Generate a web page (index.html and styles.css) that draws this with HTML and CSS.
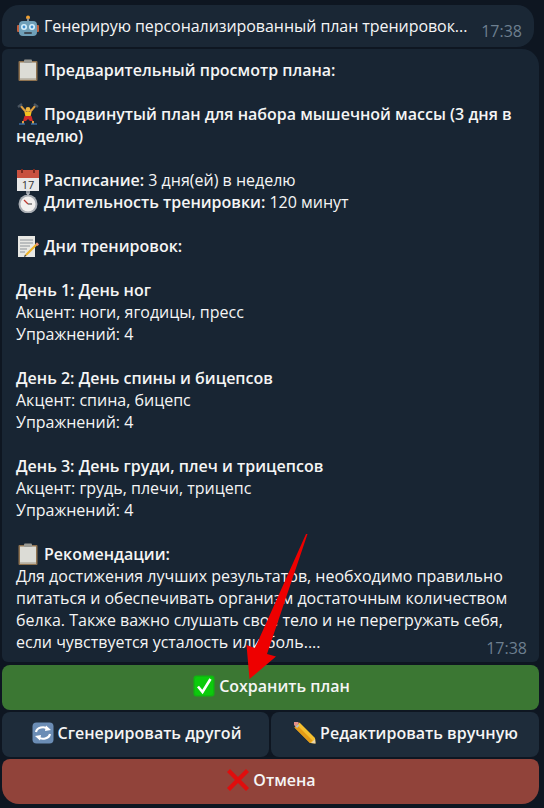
FILE: index.html
```html
<!DOCTYPE html>
<html lang="ru">
<head>
<meta charset="utf-8">
<title>План тренировок</title>
<link rel="stylesheet" href="styles.css">
</head>
<body>
<svg class="defs" width="0" height="0" aria-hidden="true">
  <symbol id="clipboard" viewBox="0 0 22 22">
    <rect x="1.5" y="2" width="19" height="20" rx="1" fill="#8f7350"/>
    <rect x="3" y="3.5" width="16" height="17" fill="#dcdcd6"/>
    <rect x="7" y="0.5" width="8" height="3.5" rx="1" fill="#9a9a94"/>
    <rect x="3" y="19" width="16" height="1.5" fill="#bdb9ae"/>
  </symbol>
</svg>
<main class="chat">
  <div class="bubble status">
    <svg class="emoji" viewBox="0 0 22 22"><circle cx="11" cy="2.5" r="2" fill="#f0a030"/><rect x="10" y="3.5" width="2" height="3" fill="#8a8f96"/><rect x="0" y="10" width="3" height="7" rx="1" fill="#c0603e"/><rect x="19" y="10" width="3" height="7" rx="1" fill="#c0603e"/><rect x="2" y="6" width="18" height="15" rx="4" fill="#6f9fb8"/><circle cx="7" cy="12" r="3" fill="#d8f0fa"/><circle cx="15" cy="12" r="3" fill="#d8f0fa"/><circle cx="7" cy="12" r="1.4" fill="#3f8fd0"/><circle cx="15" cy="12" r="1.4" fill="#3f8fd0"/><rect x="7" y="17" width="8" height="2" rx="1" fill="#3f4a55"/></svg>
    <span class="status-text">Генерирую персонализированный план тренировок...</span>
    <time class="time">17:38</time>
  </div>

  <article class="bubble message">
    <p><b><svg class="emoji" viewBox="0 0 22 22"><use href="#clipboard"/></svg>Предварительный просмотр плана:</b></p>
    <p><b><svg class="emoji" viewBox="0 0 22 22"><path d="M3 2 9 9M19 2 13 9" stroke="#e0a040" stroke-width="2"/><path d="M1 4 5 1M17 1 21 4" stroke="#4a5560" stroke-width="2.4"/><circle cx="11" cy="6.5" r="2.4" fill="#f0b840"/><path d="M7.500 9h7l-1 5h-5z" fill="#f4c020"/><path d="M7.500 13h7l1.500 5h-3l-2-2-2 2H6z" fill="#d02a2a"/><path d="M6 18v3M16 18v3" stroke="#e0a040" stroke-width="2"/><path d="M2 21h6M14 21h6" stroke="#3a6aa0" stroke-width="1.600"/></svg>Продвинутый план для набора мышечной массы (3 дня в неделю)</b></p>
    <p><b><svg class="emoji" viewBox="0 0 22 22"><rect x="0" y="1" width="22" height="21" fill="#e8e8e8"/><path d="M0 1h22v8H0z" fill="#c8503f"/><rect x="4" y="0" width="2" height="4" fill="#7c2a20"/><rect x="16" y="0" width="2" height="4" fill="#7c2a20"/><text x="11" y="19.500" class="cal-day">17</text></svg>Расписание:</b> 3 дня(ей) в неделю<br>
    <b><svg class="emoji" viewBox="0 0 22 22"><rect x="9" y="0" width="4" height="3" fill="#8b9199"/><rect x="10" y="2" width="2" height="3" fill="#b0b5bb"/><circle cx="11" cy="13" r="9.500" fill="#a8adb3"/><circle cx="11" cy="13" r="7.500" fill="#f2f0ee"/><path d="M11 13 7 9" stroke="#c03a30" stroke-width="1.200"/><path d="M11 13h4" stroke="#555" stroke-width="1.200"/></svg>Длительность тренировки:</b> 120 минут</p>
    <p><b><svg class="emoji" viewBox="0 0 22 22"><rect x="1" y="1" width="17" height="21" fill="#e8e8e4"/><path d="M3 5h13M3 8h13M3 11h10M3 14h7M3 17h5" stroke="#8c9298" stroke-width="1"/><path d="M20 7.500 9 18.500 7 22l3.500-2 11-11z" fill="#f0b429"/><path d="M20 7.500 22 9.500 20.500 11 18.500 9z" fill="#e58a80"/><path d="M7 22l1-2.500 1.500 1.500z" fill="#444"/></svg>Дни тренировок:</b></p>
    <p><b>День 1: День ног</b><br>Акцент: ноги, ягодицы, пресс<br>Упражнений: 4</p>
    <p><b>День 2: День спины и бицепсов</b><br>Акцент: спина, бицепс<br>Упражнений: 4</p>
    <p><b>День 3: День груди, плеч и трицепсов</b><br>Акцент: грудь, плечи, трицепс<br>Упражнений: 4</p>
    <p><b><svg class="emoji" viewBox="0 0 22 22"><use href="#clipboard"/></svg>Рекомендации:</b><br>Для достижения лучших результатов, необходимо правильно питаться и обеспечивать организм достаточным количеством белка. Также важно слушать свое тело и не перегружать себя, если чувствуется усталость или боль....</p>
    <time class="time time-corner">17:38</time>
  </article>

  <div class="keyboard">
    <button class="key key-save"><svg class="emoji" viewBox="0 0 22 22"><rect x="0.500" y="0.500" width="21" height="21" rx="3" fill="#0fb80f"/><rect x="2" y="2" width="18" height="18" rx="2" fill="#0ccb0c"/><path d="M5 11.500 9.500 17 17.500 4" fill="none" stroke="#fff" stroke-width="2.600"/></svg>Сохранить план</button>
    <div class="key-row">
      <button class="key key-dark"><svg class="emoji" viewBox="0 0 22 22"><rect x="0.500" y="0.500" width="21" height="21" rx="4" fill="#6b8db5"/><path d="M4 10a7 5.500 0 0 1 12-3" fill="none" stroke="#fff" stroke-width="2.200"/><path d="M18 12a7 5.500 0 0 1-12 3" fill="none" stroke="#fff" stroke-width="2.200"/><path d="M14 3.500 19 8l-6 1zM8 18.500 3 14l6-1z" fill="#fff"/></svg>Сгенерировать другой</button>
      <button class="key key-dark"><svg class="emoji" viewBox="0 0 22 22"><path d="M5.500 .5 .5 5.500 16 21l5.500 .5-.5-5.500z" fill="#f6c02e"/><path d="M3 3 8 8 18.500 18.500 16 21 .5 5.500z" fill="#e59c17"/><path d="M3.500 -.5a2.500 2.500 0 0 0-3.500 3.500L1.500 4.500 5 1z" fill="#e58f88"/><path d="M3.800 2.200 1.500 4.500 3 6 5.500 3.500z" fill="#b9bcc0"/><path d="M17 21.100 21.500 21.500 21.100 17z" fill="#e9d4ad"/></svg>Редактировать вручную</button>
    </div>
    <button class="key key-cancel"><svg class="emoji" viewBox="0 0 22 22"><path d="M3 0 11 8 19 0 22 3 14 11 22 19 19 22 11 14 3 22 0 19 8 11 0 3z" fill="#e00d0d"/></svg>Отмена</button>
  </div>
</main>
<svg class="arrow" viewBox="0 0 544 808" aria-hidden="true"><path d="M307.500 534 267 654 276 656.500 249.500 679 246.500 645 255 648 306 534z" fill="#ee0000"/></svg>
</body>
</html>
```
FILE: styles.css
```css
* { box-sizing: border-box; }
html, body { margin: 0; height: 100%; }
body {
  background: #0e1621;
  color: #f5f5f5;
  font: 16px/22px "Open Sans", "Noto Sans", sans-serif;
  overflow: hidden;
  position: relative;
}
.defs { position: absolute; }
.chat { display: flex; flex-direction: column; padding: 5px 5px 0 2px; }
.bubble { background: #182533; }
.status {
  display: flex;
  align-items: center;
  width: 532px;
  height: 42px;
  padding: 0 12px 0 14px;
  border-radius: 17px 17px 17px 6px;
  background: #1a2735;
}
.status-text { flex: 1; white-space: nowrap; letter-spacing: -0.06px; }
.time { color: #6d7f8f; }
.status .time { position: relative; top: 5px; }
.message {
  position: relative;
  margin-top: 2px;
  height: 613px;
  padding: 10px 12px 9px 14px;
  border-radius: 6px 17px 6px 6px;
}
.message p { margin: 0 0 22px; }
.message b, .key { font-weight: 600; }
.time-corner { position: absolute; right: 12px; bottom: 3px; }
.emoji {
  display: inline-block;
  width: 22px;
  height: 22px;
  margin: 0 5px 0 1px;
  vertical-align: -5px;
}
.status .emoji { flex: none; }
.cal-day { font: 11px "Open Sans", sans-serif; fill: #333; text-anchor: middle; }
.keyboard { display: flex; flex-direction: column; gap: 2px; margin-top: 3px; }
.key-row { display: grid; grid-template-columns: 267px 268px; gap: 2px; }
.key {
  height: 45px;
  border: 0;
  border-radius: 8px;
  color: #f5f5f5;
  font: 600 16px/22px "Open Sans", "Noto Sans", sans-serif;
  padding: 0 0 4px 2px;
}
.key .emoji { margin: 0 4px 0 0; }
.key-save { background: #3b7733; }
.key-dark { background: #1e2c3a; }
.key-cancel { background: #91433a; border-radius: 8px 8px 17px 17px; }
.arrow { position: absolute; inset: 0; width: 544px; height: 808px; pointer-events: none; }
```
